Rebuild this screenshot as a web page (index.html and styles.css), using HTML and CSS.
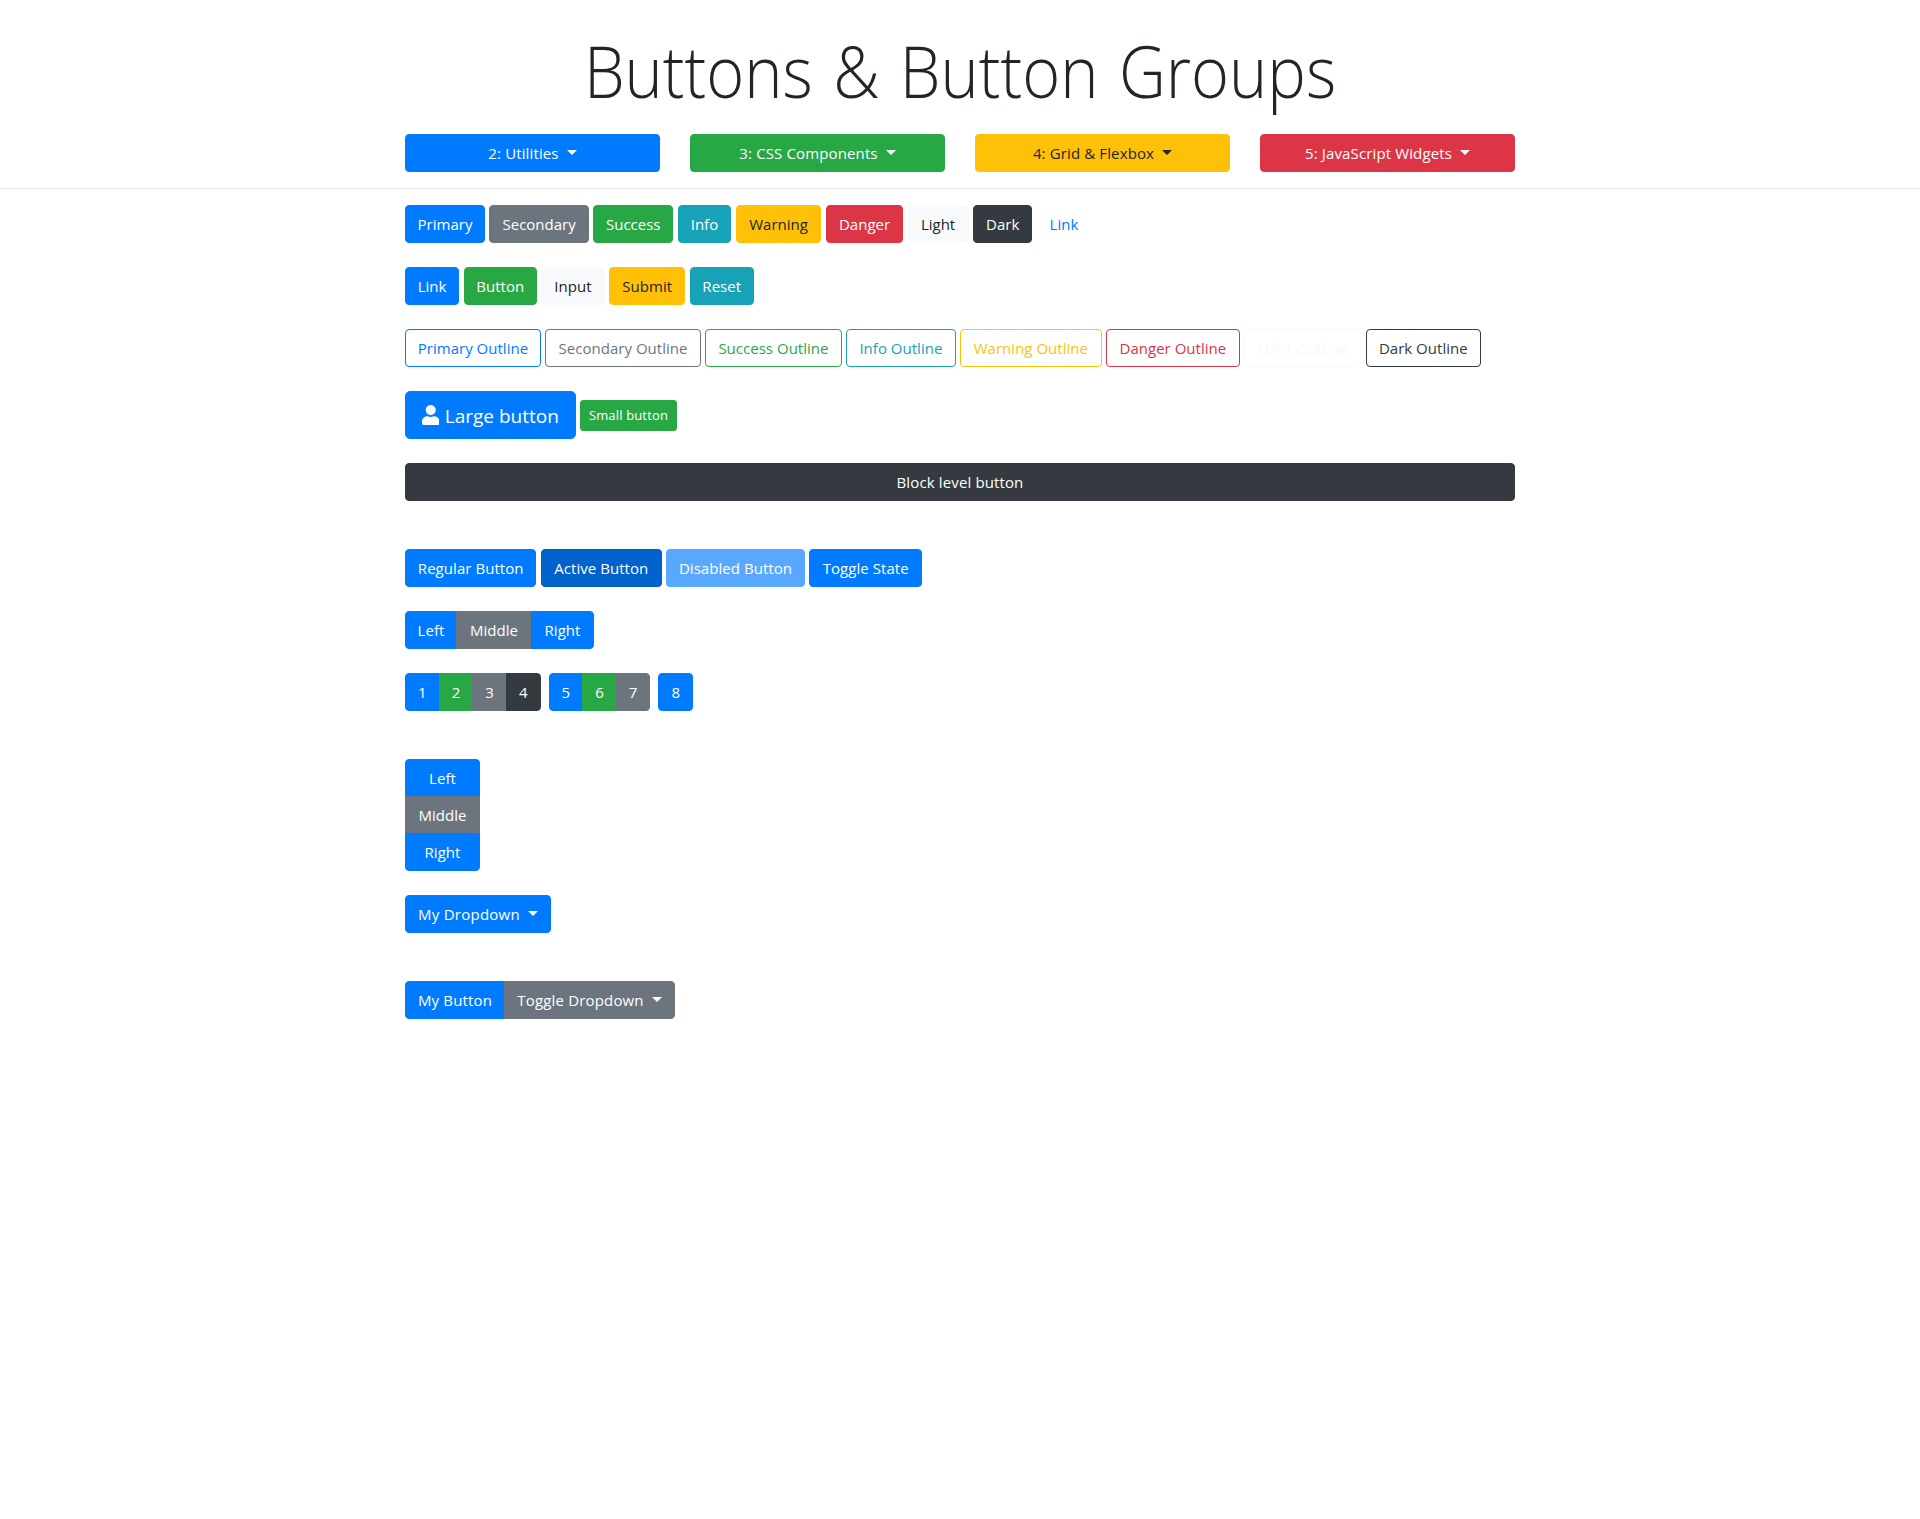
FILE: index.html
```html
<!DOCTYPE html>
<html lang="en">
<head>
<meta charset="utf-8">
<title>Buttons &amp; Button Groups</title>
<link rel="stylesheet" href="styles.css">
</head>
<body>
<header>
  <h1>Buttons &amp; Button Groups</h1>
  <nav class="container nav">
    <button class="btn primary">2: Utilities<i class="caret"></i></button>
    <button class="btn success">3: CSS Components<i class="caret"></i></button>
    <button class="btn warning">4: Grid &amp; Flexbox<i class="caret"></i></button>
    <button class="btn danger">5: JavaScript Widgets<i class="caret"></i></button>
  </nav>
</header>
<main class="container">
  <div class="row variants">
    <button class="btn primary">Primary</button>
    <button class="btn secondary">Secondary</button>
    <button class="btn success">Success</button>
    <button class="btn info">Info</button>
    <button class="btn warning">Warning</button>
    <button class="btn danger">Danger</button>
    <button class="btn light">Light</button>
    <button class="btn dark">Dark</button>
    <button class="btn link">Link</button>
  </div>
  <div class="row elements">
    <a class="btn primary">Link</a>
    <button class="btn success">Button</button>
    <button class="btn light">Input</button>
    <button class="btn warning">Submit</button>
    <button class="btn info">Reset</button>
  </div>
  <div class="row outlines">
    <button class="btn o-primary">Primary Outline</button>
    <button class="btn o-secondary">Secondary Outline</button>
    <button class="btn o-success">Success Outline</button>
    <button class="btn o-info">Info Outline</button>
    <button class="btn o-warning">Warning Outline</button>
    <button class="btn o-danger">Danger Outline</button>
    <button class="btn o-light">Light Outline</button>
    <button class="btn o-dark">Dark Outline</button>
  </div>
  <div class="row sizes">
    <button class="btn primary large"><svg class="user" viewBox="0 0 448 512"><path fill="currentColor" d="M224 256c70.7 0 128-57.3 128-128S294.7 0 224 0 96 57.3 96 128s57.3 128 128 128zm89.6 32h-16.7c-22.2 10.2-46.900 16-72.900 16s-50.600-5.800-72.900-16h-16.700C60.200 288 0 348.200 0 422.400V464c0 26.500 21.500 48 48 48h352c26.500 0 48-21.500 48-48v-41.600c0-74.200-60.200-134.400-134.400-134.400z"/></svg>Large button</button>
    <button class="btn success small">Small button</button>
  </div>
  <button class="btn dark block">Block level button</button>
  <div class="row states">
    <button class="btn primary">Regular Button</button>
    <button class="btn active">Active Button</button>
    <button class="btn primary disabled">Disabled Button</button>
    <button class="btn primary">Toggle State</button>
  </div>
  <div class="row">
    <div class="group sides">
      <button class="btn primary">Left</button>
      <button class="btn secondary">Middle</button>
      <button class="btn primary">Right</button>
    </div>
  </div>
  <div class="row toolbar">
    <div class="group">
      <button class="btn primary">1</button>
      <button class="btn success">2</button>
      <button class="btn secondary">3</button>
      <button class="btn dark">4</button>
    </div>
    <div class="group">
      <button class="btn primary">5</button>
      <button class="btn success">6</button>
      <button class="btn secondary">7</button>
    </div>
    <div class="group">
      <button class="btn primary">8</button>
    </div>
  </div>
  <div class="group vertical">
    <button class="btn primary">Left</button>
    <button class="btn secondary">Middle</button>
    <button class="btn primary">Right</button>
  </div>
  <div class="row dropdown">
    <button class="btn primary">My Dropdown<i class="caret"></i></button>
  </div>
  <div class="group split">
    <button class="btn primary">My Button</button>
    <button class="btn secondary">Toggle Dropdown<i class="caret"></i></button>
  </div>
</main>
</body>
</html>
```
FILE: styles.css
```css
*, *::before, *::after { box-sizing: border-box; }

body {
  margin: 0;
  background: #fff;
  color: #212529;
  font: 15px/24px "Open Sans", "Noto Sans", sans-serif;
}

header {
  padding: 28px 0 16px;
  margin-bottom: 16px;
  border-bottom: 1px solid #e5e5e5;
}

h1 {
  margin: 0 0 20px;
  font-size: 71px;
  line-height: 86px;
  font-weight: 300;
  text-align: center;
  word-spacing: 4px;
  transform: scaleX(.913);
}

.container { width: 1110px; margin: 0 auto; }
.nav { display: grid; grid-template-columns: repeat(4, 1fr); gap: 30px; }

/* Buttons */
.btn {
  height: 38px;
  flex: none;
  margin: 0;
  padding: 6px 0;
  border: 1px solid transparent;
  border-radius: 4px;
  background: none;
  font: inherit;
  letter-spacing: .05px;
  text-align: center;
  white-space: nowrap;
  color: #fff;
}
.primary { background: #007bff; border-color: #007bff; }
.secondary { background: #6c757d; border-color: #6c757d; }
.success { background: #28a745; border-color: #28a745; }
.info { background: #17a2b8; border-color: #17a2b8; }
.warning { background: #ffc107; border-color: #ffc107; color: #212529; }
.danger { background: #dc3545; border-color: #dc3545; }
.light { background: #f8f9fa; border-color: #f8f9fa; color: #212529; }
.dark { background: #343a40; border-color: #343a40; }
.link { color: #007bff; }
.active { background: #0062cc; border-color: #005cbf; }
.disabled { opacity: .65; }

.o-primary { color: #007bff; border-color: #007bff; }
.o-secondary { color: #6c757d; border-color: #6c757d; }
.o-success { color: #28a745; border-color: #28a745; }
.o-info { color: #17a2b8; border-color: #17a2b8; }
.o-warning { color: #ffc107; border-color: #ffc107; }
.o-danger { color: #dc3545; border-color: #dc3545; }
.o-light { color: #f8f9fa; border-color: #f8f9fa; }
.o-dark { color: #343a40; border-color: #343a40; }

.caret {
  display: inline-block;
  margin-left: 8px;
  vertical-align: 4px;
  border: 5px solid transparent;
  border-top-color: currentColor;
  border-bottom: 0;
}

.nav .btn { letter-spacing: .13px; }

/* Rows */
.row { display: flex; align-items: center; gap: 4.38px; margin-bottom: 24px; }

.variants .btn { letter-spacing: 0; }
.variants .primary { width: 80px; }
.variants .secondary { width: 99.5px; }
.variants .success { width: 80px; }
.variants .info { width: 53.7px; }
.variants .warning { width: 85.8px; }
.variants .danger { width: 77.4px; }
.variants .light { width: 60.9px; }
.variants .dark { width: 59.6px; }
.variants .link { width: 54.2px; }

.elements .primary { width: 54.2px; }
.elements .success { width: 73.3px; }
.elements .light { width: 63.5px; }
.elements .warning { width: 76.2px; }
.elements .info { width: 64.2px; }

.outlines .btn { letter-spacing: .02px; }
.o-primary { width: 135.9px; }
.o-secondary { width: 155.5px; }
.o-success { width: 136.6px; }
.o-info { width: 109.6px; }
.o-warning { width: 141.6px; }
.o-danger { width: 133.6px; }
.o-light { width: 117.4px; }
.o-dark { width: 115px; }

.large {
  width: 170.6px;
  height: 48px;
  padding: 9px 0 7px;
  border-radius: 5px;
  font-size: 19px;
  line-height: 30px;
  letter-spacing: 0;
}
.user { width: 17.5px; height: 20px; margin-right: 5.5px; vertical-align: -2px; }
.small {
  width: 97px;
  height: 31px;
  padding: 4px 0;
  border-radius: 3px;
  font-size: 13px;
  line-height: 21px;
  letter-spacing: .15px;
}
.block { display: block; width: 100%; margin-bottom: 48px; letter-spacing: .13px; }

.states :nth-child(1) { width: 131.4px; }
.states :nth-child(2) { width: 121px; }
.states :nth-child(3) { width: 138.7px; }
.states :nth-child(4) { width: 113px; }

/* Button groups */
.group { display: flex; }
.group .btn { border-radius: 0; }
.group .btn + .btn { margin-left: -1px; }
.group .btn:first-child { border-radius: 4px 0 0 4px; }
.group .btn:last-child { border-radius: 0 4px 4px 0; }
.group .btn:only-child { border-radius: 4px; }

.sides :nth-child(1) { width: 52px; }
.sides :nth-child(2) { width: 76px; }
.sides :nth-child(3) { width: 63px; }

.toolbar { gap: 8px; margin-bottom: 48px; }
.toolbar .btn { width: 34.65px; }

.group.vertical { flex-direction: column; width: 75px; margin-bottom: 24px; }
.group.vertical .btn { border-radius: 0; }
.group.vertical .btn + .btn { margin: -1px 0 0; }
.group.vertical .btn:first-child { border-radius: 4px 4px 0 0; }
.group.vertical .btn:last-child { border-radius: 0 0 4px 4px; }

.dropdown { margin-bottom: 48px; }
.dropdown .btn { width: 146px; letter-spacing: .25px; }
.split .primary { width: 100px; letter-spacing: .15px; }
.split .secondary { width: 171px; letter-spacing: .17px; }
```
